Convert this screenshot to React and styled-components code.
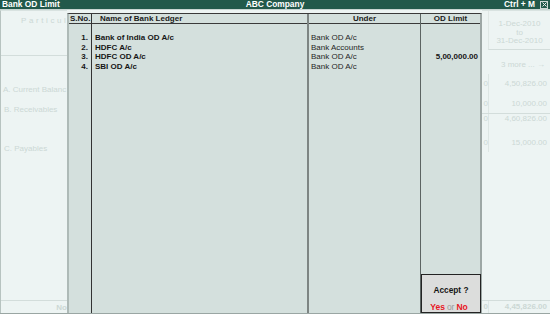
import React from 'react';
import styled, { createGlobalStyle } from 'styled-components';

const Global = createGlobalStyle`
  html, body {
    margin: 0;
    padding: 0;
    background: #edf4f3;
  }
  body {
    font-family: "Liberation Sans", Arial, sans-serif;
    font-size: 8px;
    color: #1c1c1c;
  }
`;

const Screen = styled.div`
  width: 550px;
  height: 314px;
  display: flex;
  flex-direction: column;
  overflow: hidden;
`;

const TitleBar = styled.div`
  height: 9px;
  display: grid;
  grid-template-columns: 1fr auto 1fr;
  align-items: center;
  background: #22594b;
  color: #fff;
  font-weight: bold;
  font-size: 8.4px;
  line-height: 9px;
  padding: 0 2px;
  border-bottom: 1px solid #c8d5d2;
`;

const TitleRight = styled.div`
  display: flex;
  justify-content: flex-end;
  align-items: center;
  gap: 5px;
`;

const CloseBox = styled.span`
  width: 6px;
  height: 6px;
  border: 1px solid #cfd8d6;
  display: flex;
  align-items: center;
  justify-content: center;
`;

const Body = styled.div`
  flex: 1;
  display: grid;
  grid-template-columns: 67px 415px 68px;
  border-bottom: 1px solid #9aa6a3;
  min-height: 0;
`;

const BackPanel = styled.div`
  display: flex;
  flex-direction: column;
  background: #edf4f3;
  color: #ccd8d5;
  border-left: ${({ $edge }) => ($edge ? '1px solid #b7c3c0' : 'none')};
  border-top: 1px solid #d8e2e0;
  overflow: hidden;
  white-space: nowrap;
`;

const Heading = styled.div`
  height: 39px;
  border-bottom: 1px solid #d3dddb;
  padding: 5px 0 0 20px;
  letter-spacing: 2.6px;
  line-height: 10px;
`;

const GroupList = styled.div`
  padding-top: 24px;
  display: flex;
  flex-direction: column;
`;

const GroupRow = styled.div`
  height: 19.5px;
  line-height: 19px;
  padding-left: ${({ $indent }) => $indent || 2}px;
`;

const Footer = styled.div`
  margin-top: auto;
  height: 12px;
  border-top: 1px solid #d3dddb;
  display: flex;
  justify-content: ${({ $align }) => $align || 'flex-end'};
  align-items: center;
  font-weight: bold;
`;

const DateBox = styled.div`
  height: 39px;
  border-bottom: 1px solid #d3dddb;
  border-left: 1px solid #dfe7e5;
  margin-left: 6px;
  padding-top: 9px;
  box-sizing: border-box;
  display: flex;
  flex-direction: column;
  align-items: center;
  line-height: 8.7px;
`;

const MoreLine = styled.div`
  height: 24px;
  line-height: 29px;
  text-align: center;
  padding-left: 14px;
`;

const AmountRow = styled.div`
  height: ${({ $h }) => $h || 19.5}px;
  width: 100%;
  display: grid;
  grid-template-columns: 7px 1fr;
  border-top: ${({ $ruled }) => ($ruled ? '1px solid #d3dddb' : 'none')};
  box-sizing: border-box;
  line-height: ${({ $ruled, $h }) => ($ruled ? 10 : $h || 19)}px;
`;

const Clip = styled.span`
  text-align: right;
  border-right: 1px solid #dde6e4;
  overflow: hidden;
`;

const Amount = styled.span`
  text-align: right;
  padding-right: 3px;
`;

const Dialog = styled.div`
  margin-top: 3px;
  display: flex;
  background: #d4e0dd;
  border-top: 1px solid #3a3a3a;
  border-left: 2px solid #aebab7;
  border-right: 2px solid #9da7a5;
`;

const Column = styled.div`
  display: flex;
  flex-direction: column;
  width: ${({ $w }) => ($w ? `${$w}px` : 'auto')};
  flex: ${({ $w }) => ($w ? 'none' : '1')};
  border-right: ${({ $rule }) => $rule || 'none'};
`;

const HeadCell = styled.div`
  height: 9px;
  line-height: 9px;
  border-bottom: 1px solid #3a3a3a;
  font-weight: bold;
  color: #1a1a1a;
  text-align: ${({ $align }) => $align || 'center'};
  padding-left: ${({ $pl }) => $pl || 0}px;
  white-space: nowrap;
  overflow: hidden;
`;

const Cells = styled.div`
  padding-top: 9px;
  display: flex;
  flex-direction: column;
`;

const Cell = styled.div`
  height: 9.7px;
  line-height: 9.7px;
  white-space: nowrap;
  font-weight: ${({ $bold }) => ($bold ? 'bold' : 'normal')};
  color: ${({ $bold }) => ($bold ? '#161616' : '#262626')};
  text-align: ${({ $align }) => $align || 'left'};
  padding: 0 ${({ $pr }) => $pr || 0}px 0 ${({ $pl }) => $pl || 0}px;
`;

const AcceptBox = styled.div`
  margin-top: auto;
  height: 37px;
  margin-right: -1px;
  background: #dcdddc;
  border: 1px solid #232323;
  display: flex;
  flex-direction: column;
  align-items: center;
  font-weight: bold;
`;

const AcceptTitle = styled.div`
  margin-top: 10px;
  font-size: 8.3px;
  color: #151515;
`;

const Choices = styled.div`
  margin-top: auto;
  margin-left: -4px;
  font-size: 8.5px;
  line-height: 9px;
  display: flex;
  gap: 2px;
  align-items: baseline;
`;

const Choice = styled.span`
  color: ${({ $muted }) => ($muted ? '#9a9a9a' : '#e8171f')};
  font-weight: ${({ $muted }) => ($muted ? 'normal' : 'bold')};
`;

const ledgers = [
  { no: '1.', name: 'Bank of India OD A/c', under: 'Bank OD A/c', limit: '' },
  { no: '2.', name: 'HDFC A/c', under: 'Bank Accounts', limit: '' },
  { no: '3.', name: 'HDFC OD A/c', under: 'Bank OD A/c', limit: '5,00,000.00' },
  { no: '4.', name: 'SBI OD A/c', under: 'Bank OD A/c', limit: '' },
];

const amounts = [
  { value: '4,50,826.00' },
  { value: '10,000.00' },
  { value: '4,60,826.00', ruled: true },
  { value: '15,000.00' },
];

export default function App() {
  return (
    <Screen>
      <Global />
      <TitleBar>
        <span>Bank OD Limit</span>
        <span>ABC Company</span>
        <TitleRight>
          <span>Ctrl + M</span>
          <CloseBox>
            <svg width="5" height="5" viewBox="0 0 5 5">
              <path d="M0.5 0.5 L4.5 4.5 M4.5 0.5 L0.5 4.5" stroke="#e6ecea" strokeWidth="1" />
            </svg>
          </CloseBox>
        </TitleRight>
      </TitleBar>

      <Body>
        <BackPanel $edge>
          <Heading>Particul</Heading>
          <GroupList>
            <GroupRow>A. Current Balanc</GroupRow>
            <GroupRow $indent={3}>B. Receivables</GroupRow>
            <GroupRow />
            <GroupRow $indent={3}>C. Payables</GroupRow>
          </GroupList>
          <Footer>No</Footer>
        </BackPanel>

        <Dialog>
          <Column $w={22} $rule="1px solid #333">
            <HeadCell $align="left" $pl={1}>S.No.</HeadCell>
            <Cells>
              {ledgers.map((l) => (
                <Cell key={l.no} $bold $align="right" $pr={3}>{l.no}</Cell>
              ))}
            </Cells>
          </Column>
          <Column $w={215} $rule="2px solid #7d8583">
            <HeadCell $align="left" $pl={8}>Name of Bank Ledger</HeadCell>
            <Cells>
              {ledgers.map((l) => (
                <Cell key={l.no} $bold $pl={3}>{l.name}</Cell>
              ))}
            </Cells>
          </Column>
          <Column $w={111} $rule="1px solid #5c6462">
            <HeadCell>Under</HeadCell>
            <Cells>
              {ledgers.map((l) => (
                <Cell key={l.no} $pl={2}>{l.under}</Cell>
              ))}
            </Cells>
          </Column>
          <Column>
            <HeadCell>OD Limit</HeadCell>
            <Cells>
              {ledgers.map((l) => (
                <Cell key={l.no} $bold $align="right" $pr={2}>{l.limit}</Cell>
              ))}
            </Cells>
            <AcceptBox>
              <AcceptTitle>Accept ?</AcceptTitle>
              <Choices>
                <Choice>Yes</Choice>
                <Choice $muted>or</Choice>
                <Choice>No</Choice>
              </Choices>
            </AcceptBox>
          </Column>
        </Dialog>

        <BackPanel>
          <DateBox>
            <span>1-Dec-2010</span>
            <span>to</span>
            <span>31-Dec-2010</span>
          </DateBox>
          <MoreLine>3 more ... →</MoreLine>
          {amounts.map((a) => (
            <AmountRow key={a.value} $ruled={a.ruled}>
              <Clip>0</Clip>
              <Amount>{a.value}</Amount>
            </AmountRow>
          ))}
          <Footer $align="stretch">
            <AmountRow $h={12}>
              <Clip>0</Clip>
              <Amount>4,45,826.00</Amount>
            </AmountRow>
          </Footer>
        </BackPanel>
      </Body>
    </Screen>
  );
}
